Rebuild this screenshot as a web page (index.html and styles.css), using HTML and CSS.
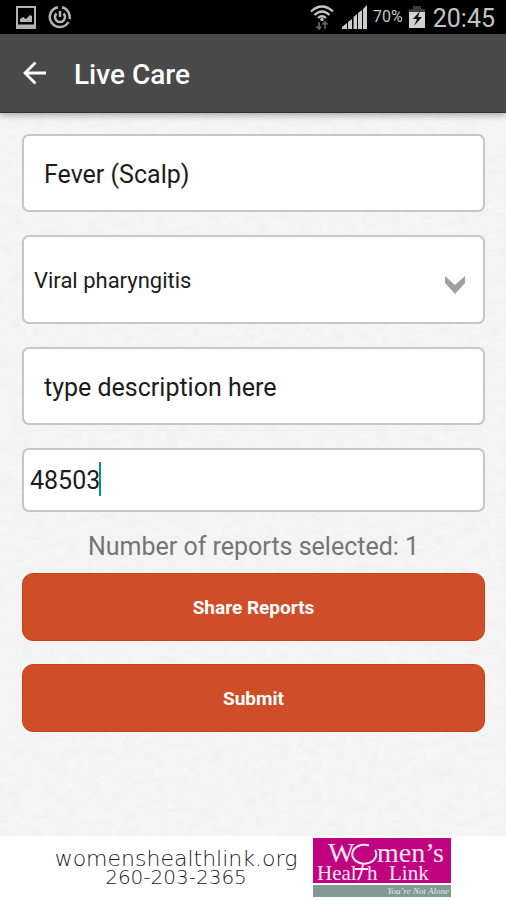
FILE: index.html
```html
<!DOCTYPE html>
<html lang="en">
<head>
<meta charset="utf-8">
<meta name="viewport" content="width=device-width, initial-scale=1">
<title>Live Care</title>
<link rel="stylesheet" href="styles.css">
</head>
<body>
<div class="screen">
  <div class="status">
    <div class="status-group notices">
      <svg width="20" height="23" viewBox="0 0 20 23" aria-hidden="true">
        <rect x="1" y="1" width="18" height="21" fill="none" stroke="#b4b4b4" stroke-width="2"/>
        <path d="M1 20h18" stroke="#b4b4b4" stroke-width="3"/>
        <path d="M4 16v-3l3-2 3 2 4-4 2 1v6z" fill="#b4b4b4"/>
      </svg>
      <svg width="24" height="24" viewBox="0 0 24 24" fill="none" stroke="#b4b4b4" aria-hidden="true">
        <path d="M14 2.200A10 10 0 0 1 21.500 14M20.500 17A10 10 0 1 1 10 2.200" stroke-width="2.500"/>
        <path d="M8.500 8.500A5 5 0 1 0 15.500 8.500M12 6v6" stroke-width="2.500"/>
      </svg>
    </div>
    <div class="status-group signals">
      <svg width="24" height="25" viewBox="0 0 24 25" fill="none" aria-hidden="true">
        <g stroke="#c4c4c4" stroke-width="2.200">
          <path d="M1 6.500Q12-3.500 23 6.500M4.500 10Q12 3 19.500 10M8 13Q12 9.500 16 13"/>
        </g>
        <circle cx="12" cy="14.500" r="1.700" fill="#c4c4c4"/>
        <path d="M9 17v7M6.500 21.500 9 24l2-2.500M15 24v-7M12.500 19.500 15 17l2.500 2.500" stroke="#666" stroke-width="1.700"/>
      </svg>
      <div class="status-group power">
        <svg width="25" height="24" viewBox="0 0 25 24" fill="#cdcdcd" aria-hidden="true">
          <path d="M0 24v-2l5-4v6zM6 24v-7l4-3v10zM11.500 24V12l3.500-3v15zM16 24V8l4-3v19zM21 24V4l4-4v24z"/>
        </svg>
        <span class="percent">70%</span>
        <svg width="16" height="22" viewBox="0 0 16 22" aria-hidden="true">
          <path d="M0 3h4V0h8v3h4v4H0z" fill="#3c3c3c"/>
          <path d="M0 6h16v16H0z" fill="#d2d2d2"/>
          <path d="M11 5 4 13h4l-3 7 8-9H9z" fill="#111"/>
        </svg>
      </div>
      <span class="clock">20:45</span>
    </div>
  </div>

  <header class="bar">
    <button class="back" type="button" aria-label="Back">
      <svg width="24" height="24" viewBox="0 0 24 24" fill="none" stroke="#fff" stroke-width="2.800" aria-hidden="true">
        <path d="M23 12H2M12.500 1.500 2 12l10.500 10.500"/>
      </svg>
    </button>
    <h1 class="title">Live Care</h1>
  </header>

  <main class="content">
    <svg class="paper" aria-hidden="true">
      <filter id="grain" x="0" y="0" width="100%" height="100%">
        <feTurbulence type="fractalNoise" baseFrequency="0.090 0.140" numOctaves="3" seed="4"/>
        <feColorMatrix values="0 0 0 0 0.500  0 0 0 0 0.500  0 0 0 0 0.500  0.180 0 0 0 -0.072"/>
      </filter>
      <rect width="100%" height="100%" filter="url(#grain)"/>
    </svg>
    <form class="form">
      <input class="field" type="text" aria-label="Symptom" value="Fever (Scalp)">
      <div class="picker">
        <select class="field select" aria-label="Condition">
          <option>Viral pharyngitis</option>
        </select>
        <svg class="chevron" width="20" height="18" viewBox="0 0 20 18" aria-hidden="true">
          <path d="M0 0 10 9 20 0v7L10 18 0 7z" fill="#a0a0a0"/>
        </svg>
      </div>
      <input class="field" type="text" aria-label="Description" placeholder="type description here">
      <div class="entry">
        <input class="field zip" type="text" inputmode="numeric" aria-label="Zip code" value="48503">
        <span class="caret"></span>
      </div>
      <div class="share">
        <p class="count">Number of reports selected: 1</p>
        <button class="action" type="button">Share Reports</button>
      </div>
      <button class="action" type="button">Submit</button>
    </form>
  </main>

  <footer class="banner">
    <div class="contact">
      <p class="site">womenshealthlink.org</p>
      <p class="phone">260-203-2365</p>
    </div>
    <svg class="logo" width="138" height="60" viewBox="0 0 138 60" role="img" aria-label="Women's Health Link">
      <rect width="138" height="45" fill="#c0047f"/>
      <rect y="47" width="138" height="12" fill="#829995"/>
      <g fill="#ffe6f5">
        <text class="logo-big" x="15" y="24">W</text>
        <text class="logo-big" x="64" y="24">men’s</text>
        <text class="logo-small" x="4" y="42">Heal</text>
        <text class="logo-small" x="54" y="42">h</text>
        <text class="logo-small" x="76" y="42">Link</text>
      </g>
      <g fill="none" stroke="#ffe6f5">
        <path d="M56 7.500A12 9.500 0 1 0 62 12" stroke-width="2"/>
        <path d="M50 25.500Q49 35 45 42M42 31h13" stroke-width="2"/>
      </g>
      <text class="logo-tag" x="136" y="56" text-anchor="end" fill="#e4ebe9">You’re Not Alone</text>
    </svg>
  </footer>
</div>
</body>
</html>
```

FILE: styles.css
```css
* {
  box-sizing: border-box;
}

body {
  margin: 0;
  background: #f5f5f5;
  color: #1c1c1c;
  font-family: Roboto, "Liberation Sans", sans-serif;
}

.screen {
  display: flex;
  flex-direction: column;
  min-height: 100vh;
}

.status {
  display: flex;
  justify-content: space-between;
  align-items: center;
  height: 34px;
  padding: 0 11px 0 16px;
  background: #000;
  color: #c4c4c4;
}

.status-group {
  display: flex;
  align-items: center;
}

.notices {
  gap: 12px;
}

.signals {
  gap: 8px;
}

.power {
  gap: 6px;
}

.percent {
  font-size: 16px;
  line-height: 24px;
}

.clock {
  font-size: 25px;
  line-height: 30px;
  padding-top: 4px;
}

.bar {
  position: relative;
  display: flex;
  align-items: center;
  gap: 27px;
  height: 79px;
  padding: 0 23px;
  background: #494949;
  border-bottom: 1px solid #333;
  box-shadow: 0 1px 8px rgba(0, 0, 0, 0.4);
  z-index: 1;
}

.back {
  display: flex;
  padding: 0;
  border: 0;
  background: none;
}

.title {
  margin: 0;
  padding-top: 2px;
  color: #fff;
  font-size: 28px;
  font-weight: 500;
}

.content {
  position: relative;
  flex: 1;
  padding: 21px 21px 21px 22px;
}

.paper {
  position: absolute;
  inset: 0;
  width: 100%;
  height: 100%;
}

.form {
  position: relative;
  display: flex;
  flex-direction: column;
  gap: 23px;
}

.field {
  display: block;
  width: 100%;
  height: 78px;
  padding: 2px 20px 0;
  border: 2px solid #c6c6c6;
  border-radius: 7px;
  background: #fff;
  color: #1c1c1c;
  font: 25px Roboto, "Liberation Sans", sans-serif;
  outline: 0;
}

.field::placeholder {
  color: #1c1c1c;
  opacity: 1;
}

.picker,
.entry {
  position: relative;
}

.select {
  height: 89px;
  padding: 2px 40px 0 10px;
  font-size: 22px;
  appearance: none;
}

.chevron {
  position: absolute;
  right: 20px;
  top: 41px;
  pointer-events: none;
}

.zip {
  height: 64px;
  padding: 0 6px;
}

.caret {
  position: absolute;
  left: 77px;
  top: 14px;
  width: 2px;
  height: 34px;
  background: #16907e;
}

.share {
  display: flex;
  flex-direction: column;
  margin-top: -23px;
}

.count {
  margin: 0;
  padding-top: 8px;
  color: #757575;
  font-size: 25px;
  line-height: 53px;
  text-align: center;
}

.action {
  height: 68px;
  padding: 0 16px;
  border: 1px solid #cb4218;
  border-radius: 11px;
  background: #cf4d27;
  color: #fff;
  font: 700 19px Roboto, "Liberation Sans", sans-serif;
}

.banner {
  display: flex;
  align-items: center;
  justify-content: center;
  gap: 16px;
  height: 64px;
  background: #fff;
}

.contact {
  color: #222;
  font-family: "DejaVu Sans", sans-serif;
  font-weight: 200;
  line-height: 19px;
  text-align: center;
}

.site,
.phone {
  margin: 0;
}

.site {
  font-size: 22px;
}

.phone {
  font-size: 20px;
}

.logo {
  flex: none;
}

.logo-big {
  font: 28px "Liberation Serif", serif;
}

.logo-small {
  font: 21px "Liberation Serif", serif;
}

.logo-tag {
  font: italic 9px "Liberation Serif", serif;
}
```
